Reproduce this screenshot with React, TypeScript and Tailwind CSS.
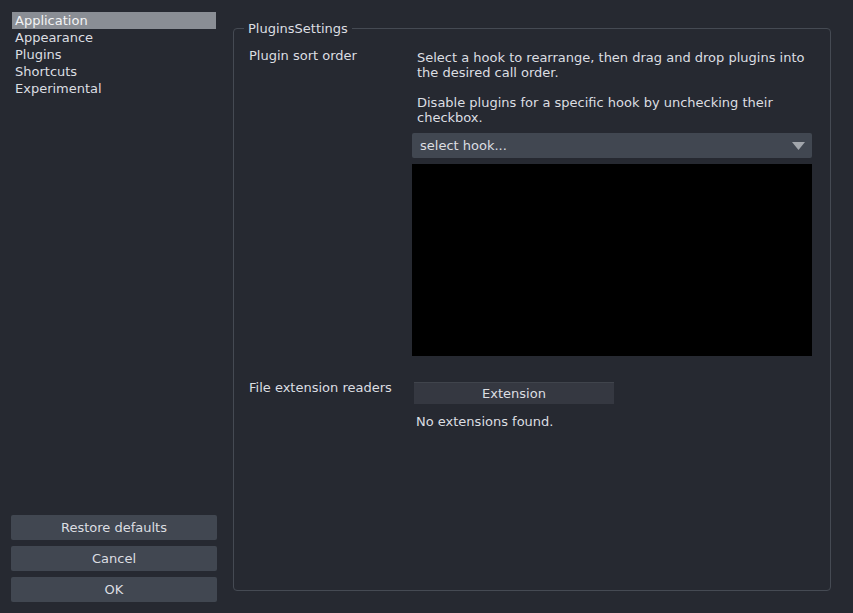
import React from 'react';

const pages = ['Application', 'Appearance', 'Plugins', 'Shortcuts', 'Experimental'];

const App: React.FC = () => {
  return (
    <div
      className="flex w-[853px] h-[613px] bg-[#262931] text-[#dcdee2] text-[13px] leading-[15px] overflow-hidden"
      style={{ fontFamily: '"DejaVu Sans", Verdana, sans-serif' }}
    >
      {/* Sidebar */}
      <div className="flex flex-col w-[206px] ml-[11px] pt-[12px] pb-[11px]">
        <ul className="mx-[1px]">
          {pages.map((p, i) => (
            <li
              key={p}
              className={`h-[17px] leading-[17px] px-[3px] ${i === 0 ? 'bg-[#8a8e95] text-[#f2f3f4]' : ''}`}
            >
              {p}
            </li>
          ))}
        </ul>
        <div className="mt-auto flex flex-col gap-[6px]">
          {['Restore defaults', 'Cancel', 'OK'].map((b) => (
            <button key={b} className="h-[25px] rounded-[2px] bg-[#414751] text-[#dcdee2]">
              {b}
            </button>
          ))}
        </div>
      </div>

      {/* Group box */}
      <div className="relative ml-[16px] mt-[28px] mb-[22px] mr-[22px] flex-1 border border-[#454a53] rounded-[4px]">
        <div className="absolute -top-[8px] left-[10px] px-[4px] bg-[#262931]">PluginsSettings</div>

        <div className="flex pl-[15px] pt-[19px]">
          <div className="w-[163px]">Plugin sort order</div>
          <div className="w-[400px]">
            <p className="pt-[2px] pl-[5px]">
              Select a hook to rearrange, then drag and drop plugins into
              <br />
              the desired call order.
              <br />
              <br />
              Disable plugins for a specific hook by unchecking their
              <br />
              checkbox.
            </p>
            <div className="mt-[8px] h-[25px] rounded-[2px] bg-[#414751] flex items-center justify-between pl-[8px] pr-[7px]">
              <span>select hook...</span>
              <svg width="13" height="8" viewBox="0 0 13 8">
                <polygon points="0,0 13,0 6.5,8" fill="#a2a6ac" />
              </svg>
            </div>
            <div className="mt-[6px] h-[192px] bg-black" />
          </div>
        </div>

        <div className="flex pl-[15px] pt-[24px]">
          <div className="w-[163px]">File extension readers</div>
          <div className="w-[400px] pl-[2px]">
            <div className="w-[200px] h-[22px] mt-[2px] bg-[#353841] border-t border-[#40444c] flex items-center justify-center">
              Extension
            </div>
            <div className="pl-[2px] mt-[10px]">No extensions found.</div>
          </div>
        </div>
      </div>
    </div>
  );
};

export default App;
